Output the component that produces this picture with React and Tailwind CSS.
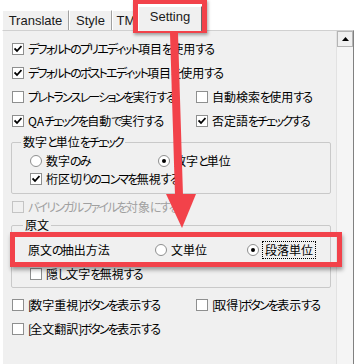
const jp = "font-['Noto_Sans_CJK_JP',sans-serif] [font-feature-settings:'palt']";

// Meiryo UI kana are narrower than Noto's, so tighten kana runs
function T({ children }) {
  const parts = String(children).split(/([\u3040-\u30ff\[\]]+)/);
  return (
    <span className="whitespace-nowrap">
      {parts.map((p, i) =>
        /^[\u3040-\u30ff\[\]]+$/.test(p) ? (
          <span key={i} className="tracking-[-1.8px]">
            {p}
          </span>
        ) : (
          p
        )
      )}
    </span>
  );
}

function Check({ checked, disabled }) {
  return (
    <span
      className={`flex h-[12px] w-[12px] shrink-0 items-center justify-center border ${
        disabled ? "border-[#c4c4c4] bg-[#f0f0f0]" : "border-[#8e8f8f] bg-white"
      }`}
    >
      {checked && (
        <svg width="8" height="8" viewBox="0 0 8 8">
          <path d="M0.5 3.5 L3 6 L7.5 1" fill="none" stroke="#000" strokeWidth="1.8" />
        </svg>
      )}
    </span>
  );
}

function Radio({ checked }) {
  return (
    <span className="flex h-[12px] w-[12px] shrink-0 items-center justify-center rounded-full border border-[#8e8f8f] bg-white">
      {checked && <span className="h-[4px] w-[4px] rounded-full bg-black" />}
    </span>
  );
}

function CheckItem({ checked, disabled, children }) {
  return (
    <div className="flex items-center gap-[4px]">
      <Check checked={checked} disabled={disabled} />
      <span className={disabled ? "text-[#a0a0a0]" : "text-black"}>
        <T>{children}</T>
      </span>
    </div>
  );
}

function RadioItem({ checked, focus, children }) {
  return (
    <div className="flex items-center gap-[3px]">
      <Radio checked={checked} />
      <span className={focus ? "border border-dotted border-black px-[2px] leading-[16px]" : "pl-[1px]"}>
        <T>{children}</T>
      </span>
    </div>
  );
}

function Tab({ label, w, selected }) {
  if (selected) {
    return (
      <div
        className={`relative z-10 -mb-px ml-[-2px] flex h-[25px] items-start justify-center border-l border-t border-r border-l-white border-t-white border-r-[#696969] bg-[#f0f0f0] pt-[3px] ${w}`}
      >
        {label}
      </div>
    );
  }
  return (
    <div
      className={`flex h-[20px] items-center justify-center border-l border-t border-r border-l-white border-t-white border-r-[#a0a0a0] bg-[#f0f0f0] ${w}`}
    >
      {label}
    </div>
  );
}

export default function App() {
  return (
    <div className={`relative h-[364px] w-[355px] overflow-hidden bg-white text-[12px] leading-[14px] text-black ${jp}`}>
      <div className="flex h-[30px] items-end pl-[2px] font-['Liberation_Sans',sans-serif] text-[13px] text-[#1a1a1a]">
        <Tab label="Translate" w="w-[67px]" />
        <Tab label="Style" w="w-[43px]" />
        <Tab label="TM" w="w-[28px]" />
        <Tab label="Setting" w="w-[64px]" selected />
      </div>

      <div className="ml-[2px] flex h-[334px] w-[352px] border-l border-t border-r border-l-white border-t-[#d0d0d0] border-r-[#808080] bg-[#f0f0f0]">
        <div className="flex-1 pl-[9px] pt-[6px]">
          <div className="grid grid-cols-[184px_1fr]">
            <div className="col-span-2 flex h-[24px] items-center">
              <CheckItem checked>デフォルトのプリエディット項目を使用する</CheckItem>
            </div>
            <div className="col-span-2 flex h-[24px] items-center">
              <CheckItem checked>デフォルトのポストエディット項目を使用する</CheckItem>
            </div>
            <div className="flex h-[24px] items-center">
              <CheckItem>プレトランスレーションを実行する</CheckItem>
            </div>
            <div className="flex h-[24px] items-center">
              <CheckItem>自動検索を使用する</CheckItem>
            </div>
            <div className="flex h-[24px] items-center">
              <CheckItem checked>QAチェックを自動で実行する</CheckItem>
            </div>
            <div className="flex h-[24px] items-center">
              <CheckItem checked>否定語をチェックする</CheckItem>
            </div>
          </div>

          <fieldset className="ml-[-1px] mt-[2px] w-[320px] rounded-[2px] border border-[#c9c9c9] pb-[5px] pl-[18px] pt-[3px]">
            <legend className="ml-[-9px] px-[2px] leading-[14px]">
              <T>数字と単位をチェック</T>
            </legend>
            <div className="grid h-[18px] grid-cols-[128px_1fr] items-center">
              <RadioItem>数字のみ</RadioItem>
              <RadioItem checked>数字と単位</RadioItem>
            </div>
            <div className="flex h-[18px] items-center">
              <CheckItem checked>桁区切りのコンマを無視する</CheckItem>
            </div>
          </fieldset>

          <div className="mt-[2px] flex h-[22px] items-center">
            <CheckItem disabled>バイリンガルファイルを対象にする</CheckItem>
          </div>

          <fieldset className="ml-[-1px] w-[320px] rounded-[2px] border border-[#c9c9c9] pb-[4px] pl-[16px] pt-[3px]">
            <legend className="ml-[-5px] px-[2px] leading-[14px]">原文</legend>
            <div className="grid h-[30px] grid-cols-[127px_92px_auto] items-center">
              <T>原文の抽出方法</T>
              <RadioItem>文単位</RadioItem>
              <RadioItem checked focus>段落単位</RadioItem>
            </div>
            <div className="ml-[2px] flex h-[18px] items-center">
              <CheckItem>隠し文字を無視する</CheckItem>
            </div>
          </fieldset>

          <div className="mt-[5px] grid grid-cols-[184px_1fr]">
            <div className="flex h-[24px] items-center">
              <CheckItem>[数字重視]ボタンを表示する</CheckItem>
            </div>
            <div className="flex h-[24px] items-center">
              <CheckItem>[取得]ボタンを表示する</CheckItem>
            </div>
            <div className="col-span-2 flex h-[24px] items-center">
              <CheckItem>[全文翻訳]ボタンを表示する</CheckItem>
            </div>
          </div>
        </div>

        <div className="flex w-[17px] flex-col border-l border-[#e2e2e2] bg-[#f5f5f5]">
          <div className="flex h-[16px] items-center justify-center border border-[#b4b4b4] bg-[#f0f0f0]">
            <svg width="7" height="4" viewBox="0 0 7 4">
              <path d="M0 4 L3.5 0 L7 4 Z" fill="#000" />
            </svg>
          </div>
        </div>
      </div>

      {/* annotations */}
      <div className="absolute left-[133px] top-[-1px] h-[34px] w-[74px] border-[5px] border-[#f2424a] shadow-[1px_2px_3px_rgba(0,0,0,0.35)]" />
      <div className="absolute left-[10px] top-[232px] h-[35px] w-[332px] border-[5px] border-[#f2424a] shadow-[1px_3px_4px_rgba(0,0,0,0.35)]" />
      <svg className="absolute left-0 top-0" width="355" height="364" viewBox="0 0 355 364">
        <polygon points="170,33 178,33 183,196 175,196" fill="#f2424a" />
        <polygon points="166,194 196,194 182,228" fill="#f2424a" />
      </svg>
    </div>
  );
}
